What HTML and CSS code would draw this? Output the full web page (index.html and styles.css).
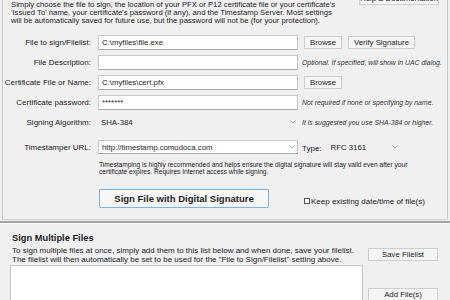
FILE: index.html
```html
<!DOCTYPE html>
<html lang="en">

<head>
    <meta charset="UTF-8">
    <meta name="viewport" content="width=device-width, initial-scale=1.0">
    <title>Code Signing</title>
    <link rel="stylesheet" href="styles.css">
</head>

<body>
    <div class="panel">
        <div class="intro">
            <p class="intro-text">Simply choose the file to sign, the location of your PFX or P12 certificate file or your certificate's<br>'Issued To' name, your certificate's password (if any), and the Timestamp Server. Most settings<br>will be automatically saved for future use, but the password will not be (for your protection).</p>
            <button class="btn help-btn">Help &amp; Documentation</button>
        </div>

        <div class="form">
            <div class="row">
                <label class="label">File to sign/Filelist:</label>
                <input class="field" type="text" value="C:\myfiles\file.exe">
                <div class="extra">
                    <button class="btn browse">Browse</button>
                    <button class="btn verify">Verify Signature</button>
                </div>
            </div>
            <div class="row">
                <label class="label">File Description:</label>
                <input class="field" type="text" value="">
                <div class="hint">Optional. If specified, will show in UAC dialog.</div>
            </div>
            <div class="row">
                <label class="label">Certificate File or Name:</label>
                <input class="field" type="text" value="C:\myfiles\cert.pfx">
                <div class="extra">
                    <button class="btn browse">Browse</button>
                </div>
            </div>
            <div class="row">
                <label class="label">Certificate password:</label>
                <input class="field" type="text" value="*******">
                <div class="hint">Not required if none or specifying by name.</div>
            </div>
            <div class="row">
                <label class="label">Signing Algorithm:</label>
                <div class="combo flat">
                    <span>SHA-384</span>
                    <svg class="chev" width="6" height="4" viewBox="0 0 6 4"><polyline points="0.5,0.5 3,3 5.5,0.5" fill="none" stroke="#9a9a9a" stroke-width="0.8"/></svg>
                </div>
                <div class="hint">It is suggested you use SHA-384 or higher.</div>
            </div>
            <div class="row ts">
                <label class="label">Timestamper URL:</label>
                <div class="combo boxed">
                    <span>http://timestamp.comodoca.com</span>
                    <svg class="chev" width="6" height="4" viewBox="0 0 6 4"><polyline points="0.5,0.5 3,3 5.5,0.5" fill="none" stroke="#9a9a9a" stroke-width="0.8"/></svg>
                </div>
                <div class="extra type">
                    <span class="type-label">Type:</span>
                    <div class="combo type-select">
                        <span>RFC 3161</span>
                        <svg class="chev" width="6" height="4" viewBox="0 0 6 4"><polyline points="0.5,0.5 3,3 5.5,0.5" fill="none" stroke="#9a9a9a" stroke-width="0.8"/></svg>
                    </div>
                </div>
            </div>
        </div>

        <p class="ts-note">Timestamping is highly recommended and helps ensure the digital signature will stay valid even after your<br>certificate expires. Requires Internet access while signing.</p>

        <div class="sign-row">
            <button class="btn sign-btn">Sign File with Digital Signature</button>
            <label class="keep"><input class="check" type="checkbox">Keep existing date/time of file(s)</label>
        </div>
    </div>

    <div class="splitter"></div>

    <div class="multi">
        <div class="multi-main">
            <h2 class="multi-title">Sign Multiple Files</h2>
            <p class="multi-text">To sign multiple files at once, simply add them to this list below and when done, save your filelist.<br>The filelist will then automatically be set to be used for the "File to Sign/Filelist" setting above.</p>
            <div class="filelist"></div>
        </div>
        <div class="multi-side">
            <button class="btn side-btn">Save Filelist</button>
            <button class="btn side-btn add">Add File(s)</button>
        </div>
    </div>
</body>

</html>
```

FILE: styles.css
```css
body {
    margin: 0;
    width: 450px;
    height: 300px;
    overflow: hidden;
    background: #f0f0f0;
    font-family: "Liberation Sans", Arial, sans-serif;
    color: #1c1c1c;
}

.panel {
    margin-left: 2px;
    width: 444px;
    border-left: 1px solid #c9c9c9;
    border-right: 1px solid #c9c9c9;
    border-bottom: 1px solid #cfcfcf;
    padding-bottom: 11px;
}

.intro {
    display: flex;
    justify-content: space-between;
    align-items: flex-start;
    padding: 0 8px;
}

.intro-text {
    margin: 0;
    padding-top: 0.7px;
    font-size: 7.7px;
    line-height: 8.2px;
    white-space: nowrap;
}

.btn {
    box-sizing: border-box;
    height: 13px;
    margin: 0;
    padding: 0;
    border: 1px solid #cdcdcd;
    background: #f5f5f5;
    font-family: "Liberation Sans", Arial, sans-serif;
    font-size: 7.8px;
    color: #1c1c1c;
}

.help-btn {
    margin-top: -8px;
    width: 80px;
}

.form {
    display: flex;
    flex-direction: column;
    gap: 5px;
    margin-top: 9.5px;
}

.row {
    display: grid;
    grid-template-columns: 95px 200px 1fr;
    align-items: center;
    height: 15px;
}

.row.ts {
    margin-top: 5.5px;
    height: 14px;
}

.label {
    text-align: right;
    padding-right: 7px;
    font-size: 8px;
    white-space: nowrap;
}

.field {
    box-sizing: border-box;
    width: 200px;
    height: 15px;
    margin: 0;
    padding: 0 3px;
    border: 1px solid #c8c8c8;
    border-bottom-color: #a9a9a9;
    background: #fff;
    font-family: "Liberation Sans", Arial, sans-serif;
    font-size: 7.8px;
    color: #1c1c1c;
    outline: none;
}

.extra {
    display: flex;
    gap: 6px;
    padding-left: 6px;
}

.browse {
    width: 38px;
}

.verify {
    width: 67px;
}

.hint {
    padding-left: 4px;
    font-size: 6.9px;
    font-style: italic;
    color: #333;
    white-space: nowrap;
}

.combo {
    box-sizing: border-box;
    display: flex;
    align-items: center;
    justify-content: space-between;
    height: 100%;
    font-size: 7.8px;
}

.combo.flat {
    width: 200px;
    padding: 0 2px 0 3px;
}

.combo.boxed {
    width: 200px;
    padding: 0 2px 0 3px;
    background: #fff;
    border: 1px solid #c8c8c8;
    border-bottom-color: #a9a9a9;
}

.extra.type {
    align-items: center;
    gap: 0;
    padding-left: 4px;
    height: 100%;
}

.type-label {
    font-size: 8px;
    padding-top: 2px;
}

.type-select {
    width: 75px;
    margin-left: 3px;
    padding: 0 2px 0 6px;
}

.chev {
    display: block;
}

.ts-note {
    margin: 6.5px 0 0 96px;
    font-size: 6.6px;
    line-height: 7px;
    white-space: nowrap;
}

.sign-row {
    display: flex;
    align-items: center;
    margin-top: 14.5px;
    padding-left: 96px;
}

.sign-btn {
    width: 170px;
    height: 19px;
    border: 1px solid #7fb2e5;
    border-radius: 1px;
    background: #f7f7f7;
    font-size: 9.5px;
    font-weight: bold;
}

.keep {
    display: flex;
    align-items: center;
    margin: 5px 0 0 35px;
    font-size: 8px;
}

.check {
    appearance: none;
    box-sizing: border-box;
    width: 6px;
    height: 6px;
    margin: 0 1px 0 0;
    border: 1px solid #555;
    background: #fff;
}

.splitter {
    margin-top: 1px;
    height: 2px;
    background: #a3a3a3;
    border-bottom: 1px solid #fafafa;
}

.multi {
    display: flex;
}

.multi-main {
    padding-left: 10px;
}

.multi-title {
    margin: 0;
    padding: 8.3px 0 0 2px;
    font-size: 9.3px;
    line-height: 11px;
}

.multi-text {
    margin: 3.7px 0 0;
    padding-left: 2px;
    font-size: 8px;
    line-height: 8.5px;
    white-space: nowrap;
}

.filelist {
    box-sizing: border-box;
    margin-top: 0.5px;
    width: 353px;
    height: 60px;
    background: #fff;
    border: 1px solid #c8c8c8;
}

.multi-side {
    display: flex;
    flex-direction: column;
    margin-left: 5px;
}

.side-btn {
    width: 70px;
    margin-top: 23.5px;
}

.side-btn.add {
    margin-top: 27.5px;
}
```
